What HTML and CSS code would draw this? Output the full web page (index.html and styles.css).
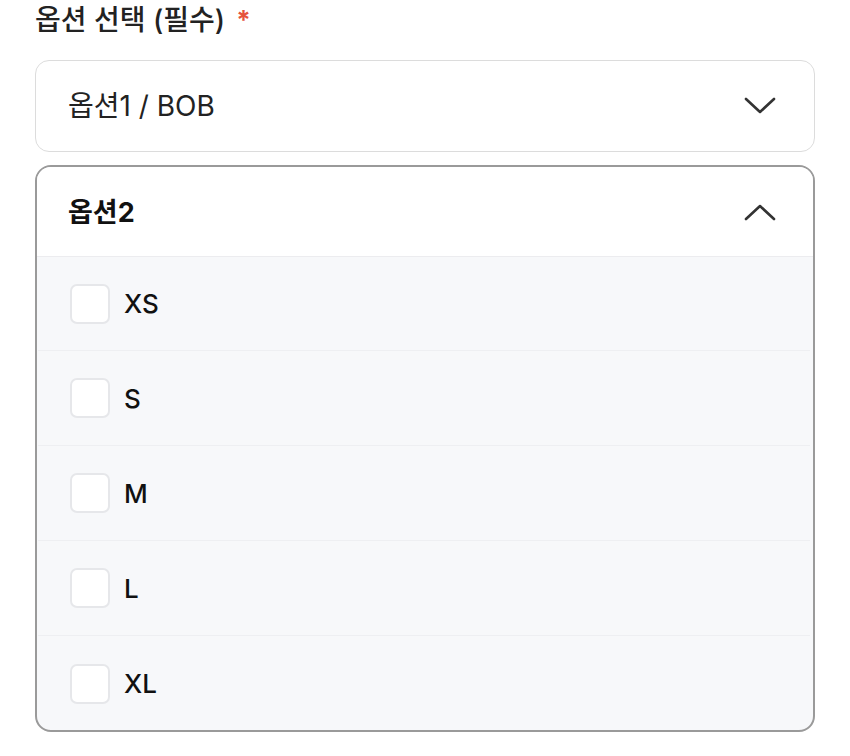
FILE: index.html
```html
<!DOCTYPE html>
<html lang="ko">
<head>
<meta charset="utf-8">
<link rel="stylesheet" href="styles.css">
</head>
<body>
<div class="field">
  <div class="label">옵션 선택 (필수)<span class="req">*</span></div>
  <div class="select">
    <span class="value">옵션1 / BOB</span>
    <svg class="chev" width="32" height="18" viewBox="0 0 32 18"><path d="M2 2 L16 15 L30 2" fill="none" stroke="#333" stroke-width="2.6" stroke-linecap="round" stroke-linejoin="round"/></svg>
  </div>
  <div class="panel">
    <div class="panel-head">
      <span class="title">옵션2</span>
      <svg class="chev" width="32" height="18" viewBox="0 0 32 18"><path d="M2 16 L16 3 L30 16" fill="none" stroke="#333" stroke-width="2.6" stroke-linecap="round" stroke-linejoin="round"/></svg>
    </div>
    <ul class="list">
      <li class="row"><span class="box"></span><span class="opt">XS</span></li>
      <li class="row"><span class="box"></span><span class="opt">S</span></li>
      <li class="row"><span class="box"></span><span class="opt">M</span></li>
      <li class="row"><span class="box"></span><span class="opt">L</span></li>
      <li class="row"><span class="box"></span><span class="opt">XL</span></li>
    </ul>
  </div>
</div>
</body>
</html>
```
FILE: styles.css
```css
* { box-sizing: border-box; }
html, body { margin: 0; padding: 0; background: #fff; }
body {
  font-family: "Inter", "Noto Sans CJK KR", sans-serif;
  color: #111;
}
.field {
  padding: 0 35px;
  display: flex;
  flex-direction: column;
}
.label {
  height: 60px;
  font-size: 28px;
  font-weight: 500;
  color: #222;
  line-height: 40px;
}
.req { color: #e5533d; font-size: 26px; font-weight: 700; vertical-align: 1px; margin-left: 11px; }
.select {
  height: 92px;
  border: 1.5px solid #dcdcdc;
  border-radius: 14px;
  display: flex;
  align-items: center;
  justify-content: space-between;
  padding: 0 38px 0 32px;
}
.value { font-size: 28px; color: #222; padding-bottom: 4px; }
.chev { display: block; }
.panel {
  margin-top: 13px;
  border: 2px solid #9a9a9a;
  border-radius: 16px;
  overflow: hidden;
  height: 567px;
  background: #f7f8fa;
}
.panel-head {
  height: 90px;
  background: #fff;
  border-bottom: 1.5px solid #ececef;
  display: flex;
  align-items: center;
  justify-content: space-between;
  padding: 0 37px 0 31px;
}
.title { font-size: 27px; font-weight: 700; color: #111; padding-bottom: 2px; }
.list { list-style: none; margin: 0; padding: 0 3px 0 1px; }
.row {
  height: 95px;
  display: flex;
  align-items: center;
  padding-left: 32px;
  border-bottom: 1.5px solid #eeeff2;
}
.row:first-child { height: 94px; }
.row:last-child { border-bottom: none; }
.box {
  width: 40px;
  height: 40px;
  border: 2px solid #e6e7ea;
  border-radius: 7px;
  background: #fff;
  margin-right: 14px;
}
.opt { font-size: 26px; font-weight: 500; color: #111; }
```
